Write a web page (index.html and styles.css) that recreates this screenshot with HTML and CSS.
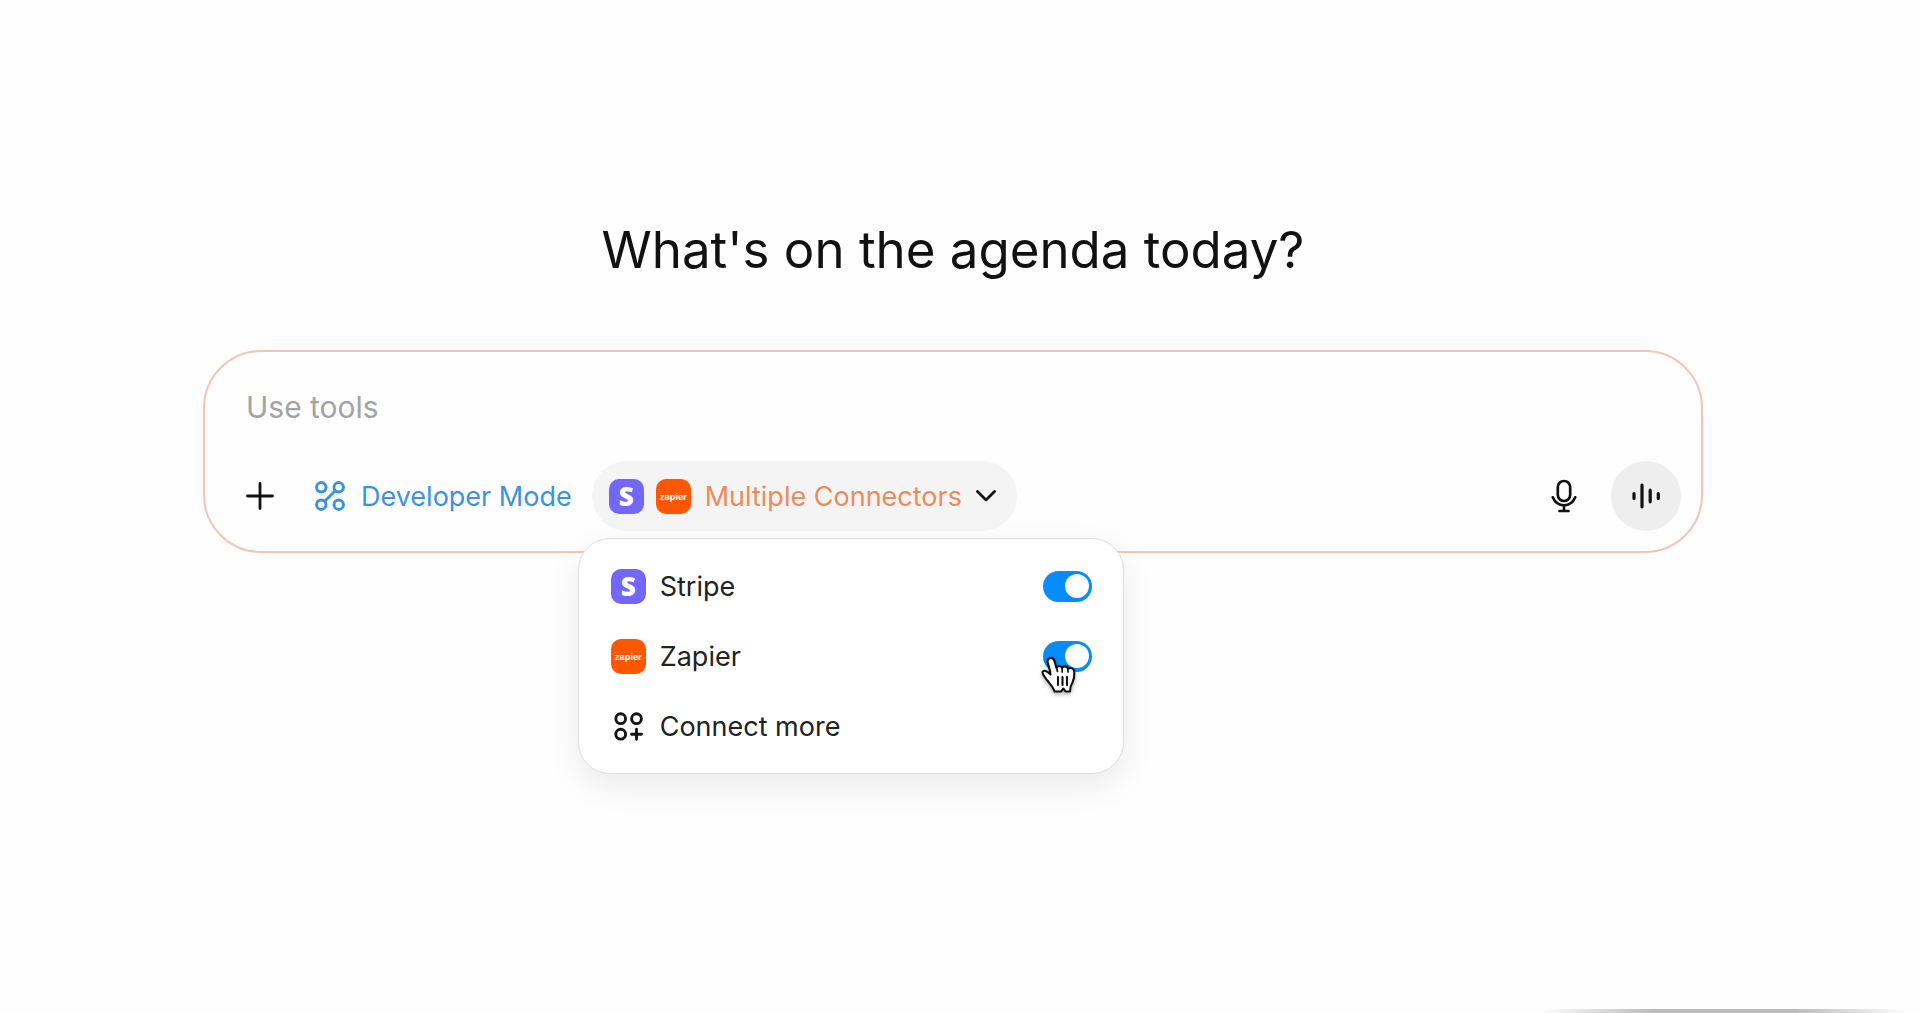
FILE: index.html
```html
<!DOCTYPE html>
<html lang="en">
<head>
  <meta charset="utf-8">
  <meta name="viewport" content="width=device-width, initial-scale=1">
  <title>New chat</title>
  <link rel="stylesheet" href="styles.css">
</head>
<body>
  <main class="page">
    <h1 class="title">What's on the agenda today?</h1>
    <form class="composer">
      <input class="prompt" type="text" placeholder="Use tools" aria-label="Prompt">
      <div class="toolbar">
        <button class="icon-btn" type="button" aria-label="Add">
          <svg width="28" height="28" viewBox="0 0 28 28" fill="none" stroke="currentColor" stroke-width="2.800" stroke-linecap="round"><path d="M14 1.500v25M1.500 14h25"/></svg>
        </button>
        <button class="mode-btn" type="button">
          <svg width="30" height="30" viewBox="0 0 30 30" fill="none" stroke="currentColor" stroke-width="3"><circle cx="6.300" cy="6.300" r="4.700"/><circle cx="23.700" cy="6.300" r="4.700"/><circle cx="6.300" cy="23.700" r="4.700"/><circle cx="23.700" cy="23.700" r="4.700"/><path d="M9.700 20.300 20.300 9.700"/></svg>
          <span>Developer Mode</span>
        </button>
        <div class="connectors">
          <button class="pill" type="button" aria-expanded="true">
            <span class="logo logo-stripe">S</span>
            <span class="logo logo-zapier">zapier</span>
            <span class="pill-label">Multiple Connectors</span>
            <svg width="20" height="12" viewBox="0 0 20 12" fill="none" stroke="#111" stroke-width="2.800" stroke-linecap="round" stroke-linejoin="round"><path d="M1.500 1.500 10 10l8.500-8.500"/></svg>
          </button>
          <div class="menu">
            <div class="row">
              <span class="logo logo-stripe">S</span>
              <label class="row-label" for="stripe">Stripe</label>
              <input class="switch" id="stripe" type="checkbox" checked>
            </div>
            <div class="row">
              <span class="logo logo-zapier">zapier</span>
              <label class="row-label" for="zapier">Zapier</label>
              <input class="switch" id="zapier" type="checkbox" checked>
              <svg class="pointer" width="36" height="40" viewBox="0 0 36 40"><path d="M9.500 2C12 1.500 13 3.300 13.600 5.500L15.500 12C16 10 20 9.400 21 11.800 22.500 9.600 26 10 27 12.500 29.500 11 33 12.600 33.300 16 33.600 21 33 23.500 31.500 26.500 29.500 29.500 29 32 29 35.500L24.500 35.500 22.500 32.500 20 35.500H13.500C12.500 31.500 9.500 28.500 6.800 25 4.500 22 1.500 19 1.500 16 2.500 13.800 5.800 14.500 9.500 18.500 9.500 14 7 9 6.500 5.500 6.400 3.600 7.800 2.200 9.500 2Z" fill="#fff" stroke="#111" stroke-width="2.100" stroke-linejoin="round"/><path d="M15.500 11.500 16.500 15.500M21.200 12v4M27 13v3" fill="none" stroke="#111" stroke-width="1.700" stroke-linecap="round"/><path d="M17 21v8M21.500 21v8M26 21v8" fill="none" stroke="#111" stroke-width="2.100" stroke-linecap="round"/></svg>
            </div>
            <button class="row" type="button">
              <svg width="35" height="35" viewBox="0 0 35 35" fill="none" stroke="#151515" stroke-width="2.900" stroke-linecap="round"><circle cx="9.700" cy="9.700" r="4.900"/><circle cx="25.500" cy="9.700" r="4.900"/><circle cx="9.700" cy="25.200" r="4.900"/><path d="M25.500 20.200v10M20.500 25.200h10"/></svg>
              <span class="row-label">Connect more</span>
            </button>
          </div>
        </div>
        <div class="voice">
          <button class="icon-btn" type="button" aria-label="Dictate">
            <svg width="26" height="34" viewBox="0 0 26 34" fill="none" stroke="currentColor" stroke-width="2.700" stroke-linecap="round"><rect x="6.800" y="2" width="12.400" height="20" rx="6.200"/><path d="M1.800 18.300C4 23.500 8 26.300 13 26.300s9-2.800 11.200-8M13 26.500V32M8.500 32h9"/></svg>
          </button>
          <button class="icon-btn icon-btn-filled" type="button" aria-label="Voice mode">
            <svg width="30" height="26" viewBox="0 0 30 26" fill="none" stroke="currentColor" stroke-width="3.200" stroke-linecap="round"><path d="M3 10.500v5M11 2.200v21.600M19.200 7.200v11.600M27.300 10.500v5"/></svg>
          </button>
        </div>
      </div>
    </form>
    <div class="edge"></div>
  </main>
</body>
</html>
```
FILE: styles.css
```css
* {
  box-sizing: border-box;
}

body {
  margin: 0;
  background: #fefefe;
  color: #111;
  font-family: Inter, "Liberation Sans", sans-serif;
}

button,
input {
  margin: 0;
  border: 0;
  padding: 0;
  background: none;
  color: inherit;
  font: inherit;
}

svg {
  display: block;
  flex: none;
}

.page {
  display: flex;
  flex-direction: column;
  align-items: center;
  min-height: 100vh;
  padding: 218px 14px 0 0;
}

.title {
  margin: 0 0 68px;
  font-size: 51px;
  line-height: 64px;
  font-weight: 400;
}

.composer {
  display: flex;
  flex-direction: column;
  gap: 30px;
  width: calc(100% - 48px);
  max-width: 1500px;
  padding: 31px 20px 20px;
  border: 2px solid #f1c6b3;
  border-radius: 58px;
}

.prompt {
  height: 48px;
  padding: 0 21px;
  font-size: 30px;
  outline: none;
}

.prompt::placeholder {
  color: #a3a3a3;
}

.toolbar {
  display: flex;
  align-items: center;
  gap: 8px;
  font-size: 27px;
}

.icon-btn {
  display: grid;
  place-items: center;
  width: 70px;
  height: 70px;
  border-radius: 50%;
}

.icon-btn-filled {
  background: #eee;
}

.mode-btn {
  display: flex;
  align-items: center;
  gap: 16px;
  height: 70px;
  padding: 0 12px;
  color: #3c92e2;
}

.connectors {
  position: relative;
}

.pill {
  display: flex;
  align-items: center;
  gap: 12px;
  height: 70px;
  padding: 0 21px 0 17px;
  border-radius: 35px;
  background: #f4f4f4;
}

.pill-label {
  padding: 0 2px;
  color: #ea8c5c;
}

.logo {
  display: grid;
  place-items: center;
  flex: none;
  width: 35px;
  height: 35px;
  border-radius: 10px;
  color: #fff;
  line-height: 1;
}

.logo-stripe {
  background: #7367fa;
  font-family: "Open Sans", Inter, sans-serif;
  font-size: 26px;
  font-weight: 800;
}

.logo-zapier {
  background: #ff5700;
  font-size: 9px;
  font-weight: 700;
}

.menu {
  position: absolute;
  top: calc(100% + 7px);
  left: -14px;
  width: 546px;
  padding: 12px 0;
  border: 1px solid #dedede;
  border-radius: 32px;
  background: #fff;
  box-shadow: 0 12px 32px rgba(0, 0, 0, 0.08);
}

.row {
  position: relative;
  display: flex;
  align-items: center;
  gap: 14px;
  width: 100%;
  height: 70px;
  padding: 0 31px 0 32px;
  color: #222;
  text-align: left;
}

.row-label {
  flex: 1;
}

.switch {
  appearance: none;
  display: flex;
  align-items: center;
  justify-content: flex-end;
  width: 49px;
  height: 31px;
  padding: 3px;
  border-radius: 16px;
  background: #ccc;
}

.switch:checked {
  background: #078cff;
}

.switch::before {
  content: "";
  width: 24px;
  height: 24px;
  border-radius: 50%;
  background: #fff;
}

.pointer {
  position: absolute;
  top: 35px;
  right: 46px;
  filter: drop-shadow(0 2px 2px rgba(0, 0, 0, 0.3));
}

.voice {
  display: flex;
  gap: 12px;
  margin-left: auto;
}

.edge {
  align-self: flex-end;
  width: 364px;
  height: 4px;
  margin-top: auto;
  background: linear-gradient(90deg, transparent, #bcbcbc 30%, #bcbcbc 70%, transparent);
}
```
